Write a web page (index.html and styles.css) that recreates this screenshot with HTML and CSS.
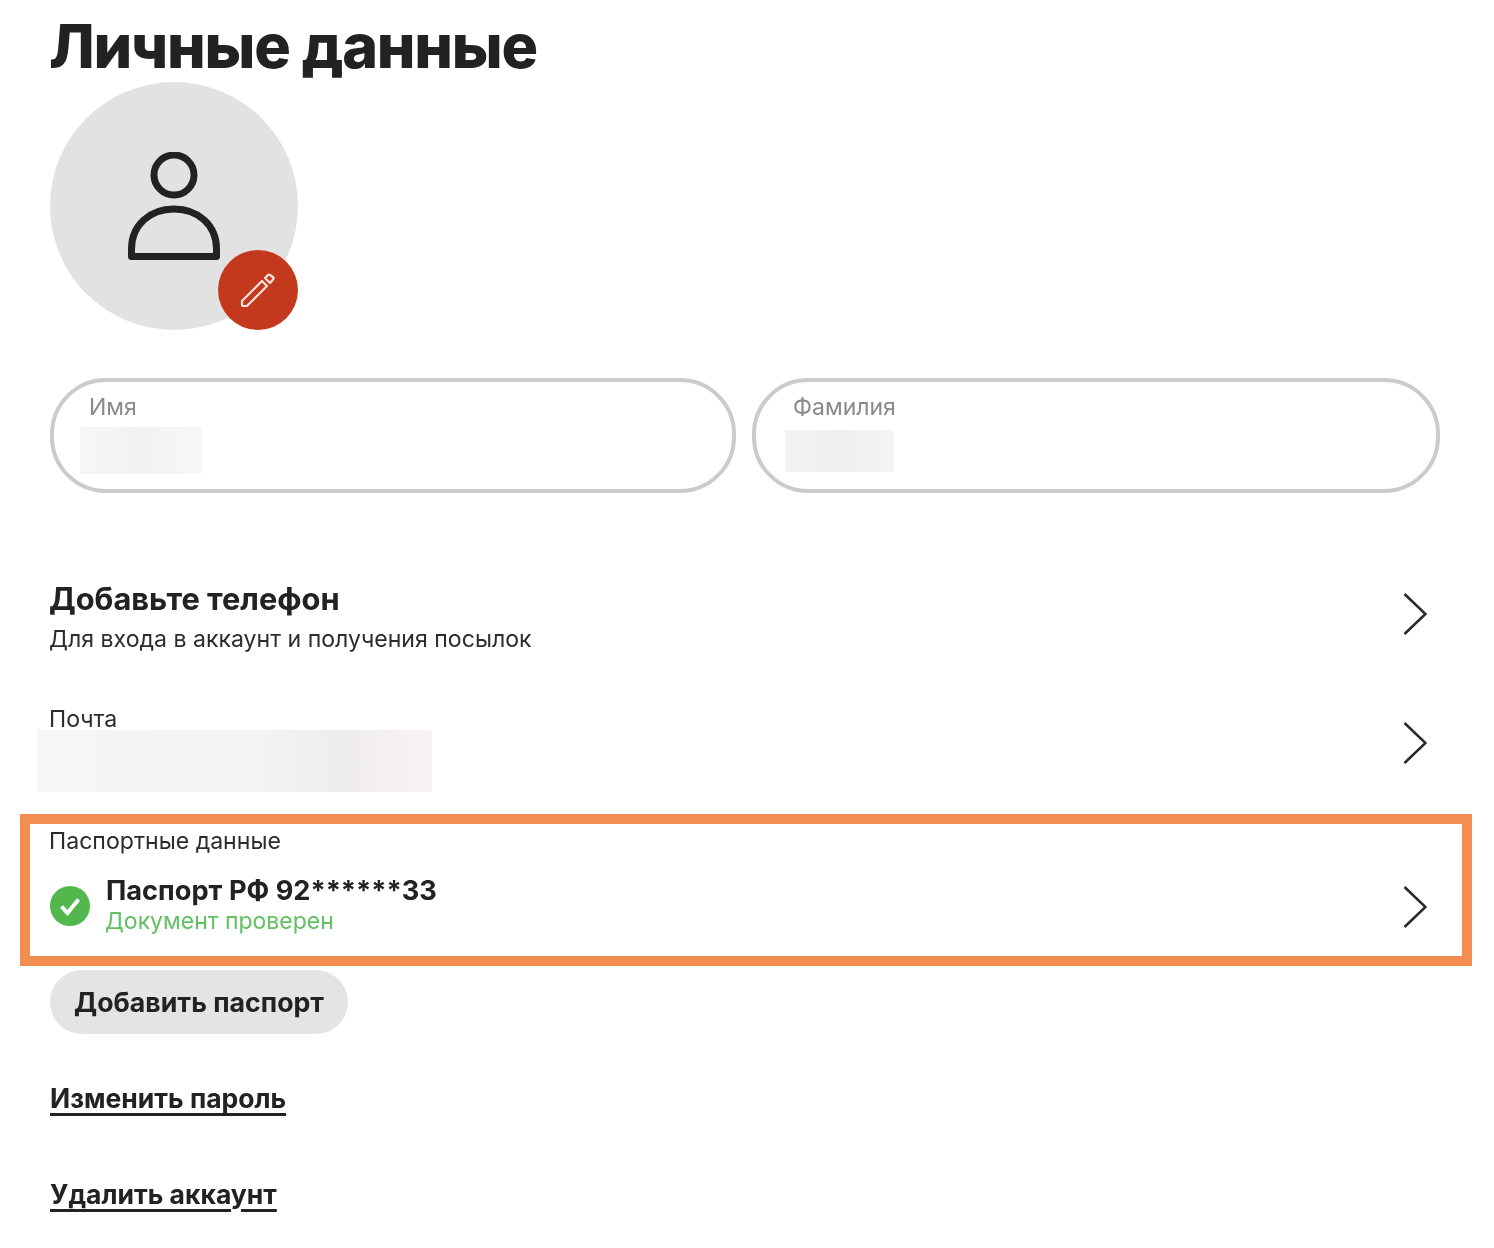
FILE: index.html
```html
<!DOCTYPE html>
<html lang="ru">
<head>
<meta charset="utf-8">
<title>Личные данные</title>
<link rel="stylesheet" href="styles.css">
</head>
<body>
<main class="page">
  <h1 class="title">Личные данные</h1>
  <div class="avatar">
    <svg class="avatar-icon" viewBox="0 0 92 108" width="92" height="108" aria-hidden="true">
      <circle cx="46" cy="23" r="20" fill="none" stroke="#222" stroke-width="7"/>
      <path d="M3.500 104.500V97C3.500 73 22 57 46 57S88.500 73 88.500 97V104.500Z" fill="none" stroke="#222" stroke-width="7" stroke-linejoin="round"/>
    </svg>
    <button class="edit" type="button" aria-label="Изменить фото">
      <svg viewBox="0 0 36 36" width="36" height="36" aria-hidden="true">
        <g fill="none" stroke="#f8e4dd" stroke-width="2.200" stroke-linejoin="round" stroke-linecap="round">
          <path d="M2 29L22 9L27 14L7 34H3.500Q2 34 2 32.500Z"/>
          <path d="M25 6L28 3Q29 2 30 3L33.500 5.500Q34 6.500 33 7.500L30 11Z"/>
        </g>
      </svg>
    </button>
  </div>

  <div class="fields">
    <div class="field field-first">
      <span class="field-label">Имя</span>
      <span class="mask mask-name"></span>
    </div>
    <div class="field field-last">
      <span class="field-label">Фамилия</span>
      <span class="mask mask-surname"></span>
    </div>
  </div>

  <section class="row row-phone">
    <div class="row-body">
      <div class="row-title">Добавьте телефон</div>
      <div class="row-sub">Для входа в аккаунт и получения посылок</div>
    </div>
    <svg class="chevron" viewBox="0 0 24 42" width="24" height="42" aria-hidden="true"><path d="M1.500 1L22.500 21L1.500 41" fill="none" stroke="#2a2a2a" stroke-width="2.600"/></svg>
  </section>

  <section class="row row-mail">
    <div class="row-body">
      <div class="row-sub">Почта</div>
      <div class="mask mask-mail"></div>
    </div>
    <svg class="chevron" viewBox="0 0 24 42" width="24" height="42" aria-hidden="true"><path d="M1.500 1L22.500 21L1.500 41" fill="none" stroke="#2a2a2a" stroke-width="2.600"/></svg>
  </section>

  <section class="row row-passport">
    <div class="row-body">
      <div class="row-sub">Паспортные данные</div>
      <div class="doc">
        <svg class="doc-check" viewBox="0 0 40 40" width="40" height="40" aria-hidden="true">
          <circle cx="20" cy="20" r="20" fill="#52b84e"/>
          <path d="M11.500 20.500L17.500 27L28.500 13.500" fill="none" stroke="#fff" stroke-width="4"/>
        </svg>
        <div>
          <div class="doc-title">Паспорт РФ 92******33</div>
          <div class="doc-status">Документ проверен</div>
        </div>
      </div>
    </div>
    <svg class="chevron" viewBox="0 0 24 42" width="24" height="42" aria-hidden="true"><path d="M1.500 1L22.500 21L1.500 41" fill="none" stroke="#2a2a2a" stroke-width="2.600"/></svg>
  </section>

  <button class="add" type="button">Добавить паспорт</button>
  <a class="link link-first" href="#">Изменить пароль</a>
  <a class="link" href="#">Удалить аккаунт</a>
</main>
</body>
</html>
```

FILE: styles.css
```css
* { box-sizing: border-box; }
html, body { margin: 0; background: #fff; }
body {
  font-family: Inter, "Liberation Sans", sans-serif;
  color: #222;
}
.page {
  width: 1494px;
  height: 1248px;
  padding: 0 54px 0 50px;
  overflow: hidden;
  filter: blur(0.5px);
}
.title {
  margin: 0 0 0 -1px;
  height: 82px;
  padding-top: 9px;
  font-size: 61px;
  line-height: 74px;
  font-weight: 800;
  letter-spacing: -1.250px;
}
.avatar {
  position: relative;
  width: 248px;
  height: 248px;
  border-radius: 50%;
  background: #e2e2e2;
  display: flex;
  justify-content: center;
  padding: 70px 0 0 0;
}
.edit {
  position: absolute;
  right: 0;
  bottom: 0;
  width: 80px;
  height: 80px;
  padding: 0;
  border: 0;
  border-radius: 50%;
  background: #c4391d;
  display: flex;
  align-items: center;
  justify-content: center;
}
.fields {
  display: flex;
  gap: 16px;
  margin-top: 48px;
}
.field {
  height: 115px;
  border: 4px solid #cbcbcb;
  border-radius: 56px;
  padding: 12px 0 0 35px;
  display: flex;
  flex-direction: column;
  align-items: flex-start;
}
.field-first { flex: 0 0 686px; }
.field-last { flex: 1 1 0; padding-left: 37px; }
.field-label {
  font-size: 23px;
  line-height: 27px;
  color: #8a8a8a;
}
.mask {
  display: block;
  background: #f3f3f3;
}
.mask-name {
  width: 122px;
  height: 47px;
  margin: 6px 0 0 -9px;
  background: linear-gradient(90deg, #f6f6f6, #f2f2f2 50%, #f7f7f7);
}
.mask-surname {
  width: 109px;
  height: 42px;
  margin: 9px 0 0 -8px;
  background: linear-gradient(90deg, #f3f3f3, #eeeeee 50%, #f4f4f4);
}
.row {
  display: flex;
  align-items: center;
  justify-content: space-between;
}
.row-title {
  font-size: 30.800px;
  line-height: 38px;
  font-weight: 700;
  margin-left: -1px;
}
.row-sub {
  font-size: 23.100px;
  line-height: 28px;
  color: #2c2c2c;
  margin-left: -1px;
}
.chevron { flex: none; margin-right: 13px; }
.row-phone {
  margin-top: 87px;
  height: 72px;
}
.row-phone .chevron { margin-bottom: 4px; }
.row-phone .row-sub { margin-top: 7px; }
.row-mail {
  margin-top: 55px;
  height: 99px;
  align-items: flex-start;
}
.row-mail .chevron { margin-top: 15px; }
.row-mail .row-sub { line-height: 24px; height: 23px; }
.mask-mail {
  width: 395px;
  height: 62px;
  margin-left: -13px;
  background: linear-gradient(90deg, #f7f6f6, #f4f3f3 55%, #efedeb 78%, #f7f4f3);
}
.row-passport {
  margin: 8px -32px 0 -30px;
  height: 152px;
  padding: 3px 0 0 20px;
  border: 10px solid #f28e52;
  align-items: flex-start;
}
.row-passport .chevron { margin: 59px 35px 0 0; }
.doc {
  display: flex;
  align-items: center;
  gap: 16px;
  margin-top: 20px;
}
.doc-title {
  font-size: 27.200px;
  line-height: 32px;
  font-weight: 700;
}
.doc-status {
  font-size: 23px;
  line-height: 30px;
  color: #62c162;
  margin: -1px 0 0 -1px;
}
.add {
  display: block;
  margin-top: 4px;
  width: 298px;
  height: 64px;
  border: 0;
  border-radius: 32px;
  background: #e4e4e4;
  color: #222;
  font: 700 26.700px/64px Inter, "Liberation Sans", sans-serif;
  padding: 0;
}
.link {
  display: block;
  width: max-content;
  margin-top: 60px;
  font-size: 26.500px;
  line-height: 36px;
  font-weight: 700;
  color: #222;
  text-underline-offset: 5px;
  text-decoration-thickness: 3px;
}
.link-first { margin-top: 46px; }
```
